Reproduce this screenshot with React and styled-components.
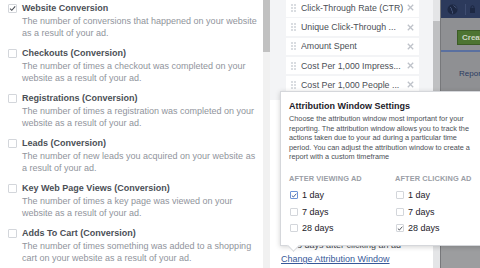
import React from 'react';
import styled, { createGlobalStyle } from 'styled-components';

const GlobalStyle = createGlobalStyle`
  html, body {
    margin: 0;
    padding: 0;
    width: 480px;
    height: 268px;
    overflow: hidden;
    background: #fff;
    font-family: "Liberation Sans", Arial, Helvetica, sans-serif;
  }
`

const Page = styled.div`
  display: flex;
  flex-direction: row;
  width: 480px;
  height: 268px;
  overflow: hidden;
`

const LeftPanel = styled.div`
  flex: none;
  width: 255px;
  padding: 1.5px 0 0 8px;
  background: #fff;
  display: flex;
  flex-direction: column;
  gap: 8px;
`

const Metric = styled.div`
  display: flex;
  flex-direction: row;
  align-items: flex-start;
  gap: 4px;
`

const MetricText = styled.div`
  display: flex;
  flex-direction: column;
  padding-left: 1px;
`

const MetricTitle = styled.div`
  font-size: 9px;
  line-height: 13px;
  font-weight: bold;
  color: #4b4f56;
  white-space: nowrap;
`

const MetricDesc = styled.div`
  font-size: 9px;
  line-height: 12px;
  color: #90949c;
  width: 236px;
`

const Box = styled.span`
  flex: none;
  box-sizing: border-box;
  width: ${p => p.size}px;
  height: ${p => p.size}px;
  margin-top: ${p => p.top || 0}px;
  border: 1px solid ${p => (p.accent ? '#6d93d8' : '#d3d6db')};
  border-radius: 1px;
  background: #fff;
  display: flex;
  align-items: center;
  justify-content: center;
`

const Scrollbar = styled.div`
  width: 7px;
  flex: none;
  background: ${p => p.track};
  display: flex;
  flex-direction: column;
`

const Thumb = styled.div`
  margin-top: ${p => p.offset}px;
  height: ${p => p.length}px;
  background: ${p => p.color};
`

const MiddleColumn = styled.div`
  position: relative;
  width: 163px;
  flex: none;
  display: flex;
  flex-direction: column;
  background: #fff;
`

const ColumnList = styled.div`
  background: #f3f4f6;
  padding: 0 14px 6px 16px;
  margin-top: -1px;
  display: flex;
  flex-direction: column;
  gap: 1.75px;
`

const ColumnRow = styled.div`
  height: 17.5px;
  background: #fff;
  display: flex;
  flex-direction: row;
  align-items: center;
  padding: 0 5px 0 5px;
  gap: 5px;
`

const Handle = styled.div`
  display: grid;
  grid-template-columns: 2px 2px;
  grid-auto-rows: 2px;
  gap: 1px;
  flex: none;
  span {
    background: #dadde1;
  }
`

const RowLabel = styled.span`
  flex: 1;
  min-width: 0;
  font-size: 8.8px;
  color: #4b4f56;
  white-space: nowrap;
  overflow: hidden;
  margin-right: -3px;
`

const ColumnFooter = styled.div`
  flex: 1;
  display: flex;
  flex-direction: column;
  justify-content: flex-end;
  padding: 0 0 3px 11px;
`

const HiddenNote = styled.div`
  font-size: 9px;
  line-height: 12px;
  color: #4b4f56;
  padding-left: 11px;
  margin-bottom: 2px;
`

const Link = styled.a`
  font-size: 9px;
  line-height: 12px;
  color: #365899;
  text-decoration: underline;
  white-space: nowrap;
`

const Popover = styled.div`
  position: absolute;
  left: 10px;
  top: 91px;
  width: 212px;
  box-sizing: border-box;
  padding: 9px 0 9px 8px;
  background: #fff;
  border: 1px solid #d5d7db;
  box-shadow: 0 1px 5px rgba(0, 0, 0, 0.18);
  z-index: 5;
  &::after {
    content: '';
    position: absolute;
    left: 8px;
    bottom: -5px;
    width: 8px;
    height: 8px;
    background: #fff;
    border-right: 1px solid #d5d7db;
    border-bottom: 1px solid #d5d7db;
    transform: rotate(45deg);
  }
`

const PopTitle = styled.div`
  font-size: 9px;
  line-height: 11px;
  font-weight: bold;
  color: #1d2129;
`

const PopText = styled.p`
  margin: 2px 0 0;
  font-size: 7.3px;
  line-height: 9.6px;
  color: #4b4f56;
  width: 182px;
`

const Windows = styled.div`
  display: grid;
  grid-template-columns: 106px auto;
  margin-top: 12px;
`

const WindowHead = styled.div`
  font-size: 7.4px;
  line-height: 10px;
  font-weight: bold;
  color: #9a9ea6;
  letter-spacing: 0.1px;
  margin-bottom: 3px;
  white-space: nowrap;
`

const Option = styled.div`
  display: flex;
  flex-direction: row;
  align-items: center;
  gap: 4px;
  height: 16.5px;
  padding-left: 1px;
  font-size: 9px;
  color: #1d2129;
`

const DimPage = styled.div`
  flex: 1;
  min-width: 0;
  overflow: hidden;
  display: flex;
  flex-direction: column;
  background: #8f9093;
  border-left: 1px solid #77787b;
`

const DimHeader = styled.div`
  height: 18px;
  flex: none;
  background: #2c3a5c;
  display: flex;
  align-items: center;
  padding-left: 6px;
  gap: 7px;
`

const DimButton = styled.div`
  margin: 12px 0 0 16px;
  height: 13px;
  background: #4d7432;
  border: 1px solid #3c5c26;
  border-right: none;
  color: #cdd6c6;
  font-size: 8px;
  font-weight: bold;
  line-height: 13px;
  padding-left: 4px;
  white-space: nowrap;
  overflow: hidden;
`

const DimRule = styled.div`
  margin-top: 5px;
  height: 2px;
  background: #5a70a0;
`

const DimText = styled.div`
  margin: 17px 0 0 18px;
  font-size: 8px;
  color: #2b3b62;
  white-space: nowrap;
`

const DimFooter = styled.div`
  margin-top: auto;
  height: 24px;
  background: #9c9d9f;
  border-top: 1px solid #838487;
`

const Check = ({ color = '#4b4f56' }) => (
  <svg width="7" height="7" viewBox="0 0 7 7">
    <path d="M1 3.6 L2.8 5.3 L6.2 1.4" fill="none" stroke={color} strokeWidth="1.1" />
  </svg>
)

const CheckBox = ({ checked, size = 8, top, accent }) => (
  <Box size={size} top={top} accent={accent}>
    {checked && <Check color={accent ? '#3b5998' : '#4b4f56'} />}
  </Box>
)

const metrics = [
  { title: 'Website Conversion', desc: 'The number of conversions that happened on your website as a result of your ad.', checked: true },
  { title: 'Checkouts (Conversion)', desc: 'The number of times a checkout was completed on your website as a result of your ad.' },
  { title: 'Registrations (Conversion)', desc: 'The number of times a registration was completed on your website as a result of your ad.' },
  { title: 'Leads (Conversion)', desc: 'The number of new leads you acquired on your website as a result of your ad.' },
  { title: 'Key Web Page Views (Conversion)', desc: 'The number of times a key page was viewed on your website as a result of your ad.' },
  { title: 'Adds To Cart (Conversion)', desc: 'The number of times something was added to a shopping cart on your website as a result of your ad.' },
]

const columns = [
  'Click-Through Rate (CTR)',
  'Unique Click-Through ...',
  'Amount Spent',
  'Cost Per 1,000 Impress...',
  'Cost Per 1,000 People ...',
]

const viewing = [
  { label: '1 day', checked: true, accent: true },
  { label: '7 days' },
  { label: '28 days' },
]

const clicking = [
  { label: '1 day' },
  { label: '7 days' },
  { label: '28 days', checked: true },
]

const CloseIcon = () => (
  <svg width="7" height="7" viewBox="0 0 7 7" style={{ flex: 'none' }}>
    <path d="M0.8 0.8 L6.2 6.2 M6.2 0.8 L0.8 6.2" stroke="#bec2c9" strokeWidth="1.3" />
  </svg>
)

const App = () => {
  return (
    <Page>
      <GlobalStyle />
      <LeftPanel>
        {metrics.map(m => (
          <Metric key={m.title}>
            <CheckBox size={9} top={2} checked={m.checked} />
            <MetricText>
              <MetricTitle>{m.title}</MetricTitle>
              <MetricDesc>{m.desc}</MetricDesc>
            </MetricText>
          </Metric>
        ))}
      </LeftPanel>
      <Scrollbar track="#f1f1f1">
        <Thumb offset={0} length={52} color="#c1c1c1" />
      </Scrollbar>
      <MiddleColumn>
        <ColumnList>
          {columns.map(c => (
            <ColumnRow key={c}>
              <Handle>
                <span /><span /><span /><span /><span /><span />
              </Handle>
              <RowLabel>{c}</RowLabel>
              <CloseIcon />
            </ColumnRow>
          ))}
        </ColumnList>
        <ColumnFooter>
          <HiddenNote>28 days after clicking an ad</HiddenNote>
          <Link href="#">Change Attribution Window</Link>
        </ColumnFooter>
        <Popover>
          <PopTitle>Attribution Window Settings</PopTitle>
          <PopText>
            Choose the attribution window most important for your reporting. The attribution window allows you to track the actions taken due to your ad during a particular time period. You can adjust the attribution window to create a report with a custom timeframe
          </PopText>
          <Windows>
            <div>
              <WindowHead>AFTER VIEWING AD</WindowHead>
              {viewing.map(o => (
                <Option key={o.label}>
                  <CheckBox checked={o.checked} accent={o.accent} />
                  {o.label}
                </Option>
              ))}
            </div>
            <div>
              <WindowHead>AFTER CLICKING AD</WindowHead>
              {clicking.map(o => (
                <Option key={o.label}>
                  <CheckBox checked={o.checked} />
                  {o.label}
                </Option>
              ))}
            </div>
          </Windows>
        </Popover>
      </MiddleColumn>
      <Scrollbar track="#e4e5e7">
        <Thumb offset={21} length={130} color="#bfc0c2" />
      </Scrollbar>
      <DimPage>
        <DimHeader>
          <svg width="11" height="11" viewBox="0 0 11 11">
            <circle cx="5.5" cy="5.5" r="5" fill="#1d2843" />
            <path d="M3 3 Q5 4 4.5 6 Q6 7 5.5 9.5 M6.5 1.5 Q8 3 9.5 4" stroke="#46557a" strokeWidth="1" fill="none" />
          </svg>
          <svg width="10" height="11" viewBox="0 0 10 11">
            <path d="M0.5 0 V11" stroke="#3e4c70" strokeWidth="1" />
            <rect x="5" y="4" width="5" height="5" fill="#1d2843" />
            <path d="M6 4 V2.5 Q7.5 0.8 9 2.5 V4" stroke="#1d2843" strokeWidth="1" fill="none" />
          </svg>
        </DimHeader>
        <DimButton>Create</DimButton>
        <DimRule />
        <DimText>Reports</DimText>
        <DimFooter />
      </DimPage>
    </Page>
  )
}

export default App;
